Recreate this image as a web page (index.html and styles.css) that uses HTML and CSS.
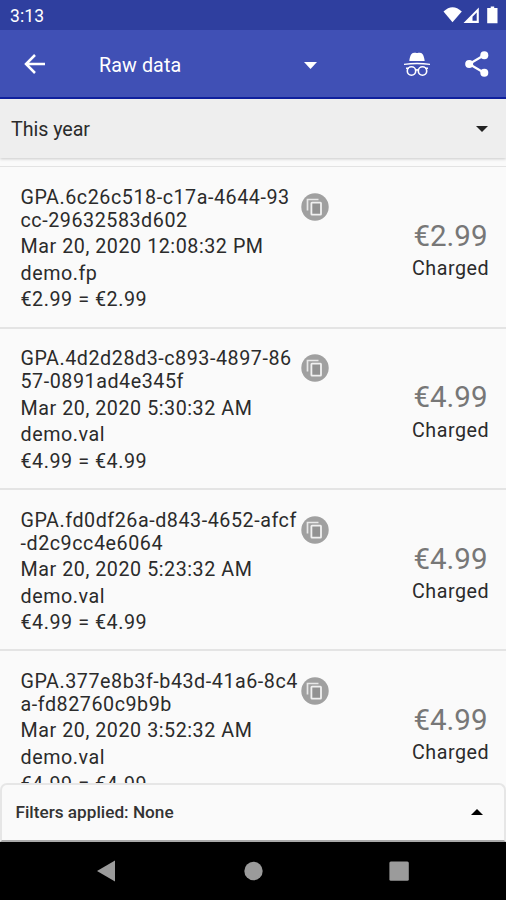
FILE: index.html
```html
<!DOCTYPE html>
<html lang="en">
<head>
<meta charset="utf-8">
<title>Raw data</title>
<link rel="stylesheet" href="styles.css">
</head>
<body>
<svg class="defs" aria-hidden="true">
  <symbol id="copy" viewBox="0 0 28 28">
    <circle cx="14" cy="14" r="13.7" fill="#a0a0a0"/>
    <path d="M6.500 17.500V6.500H17.500" fill="none" stroke="#e8e8e8" stroke-width="1.700"/>
    <rect x="10.400" y="9.700" width="9.600" height="12" rx=".6" fill="#929292" stroke="#f0f0f0" stroke-width="1.800"/>
  </symbol>
</svg>
<div class="screen">
  <header class="status">
    <span class="clock">3:13</span>
    <svg class="status-icons" viewBox="0 0 58 20">
      <path d="M1.500 6.500Q10.500 -2 19.800 6.500L10.500 17.300Z" fill="#fff"/>
      <path fill-rule="evenodd" d="M21.500 18L36.800 2.500V18ZM30.500 11.800V15.800H34.700V7.500Z" fill="#fff"/>
      <path d="M48.700 1.500h3.500v1.500h3.300v15.300h-10.300v-15.300h3.500z" fill="#fff"/>
    </svg>
  </header>
  <nav class="toolbar">
    <svg class="back" viewBox="0 0 22 20"><path d="M21 10H2.500M11 1L2 10l9 9" fill="none" stroke="#fff" stroke-width="2.500"/></svg>
    <span class="title">Raw data</span>
    <svg class="caret" viewBox="0 0 13 7"><path d="M0 0h13l-6.500 7z" fill="#fff"/></svg>
    <svg class="incognito" viewBox="0 0 26 25">
      <path d="M5.300 9C6 3.500 7.500.700 10 .700C12 .700 12 .900 13 .900S14.500.700 16 .700C18.500.700 20 3.500 20.700 9Z" fill="#fff"/>
      <path d="M0 11.700Q13 9.800 26 11.700V12.900Q13 11.600 0 12.900Z" fill="#fff"/>
      <g fill="none" stroke="#fff" stroke-width="1.600"><circle cx="7.500" cy="19" r="4.200"/><circle cx="18.500" cy="19" r="4.200"/><path d="M11.500 18.500Q13 17 14.500 18.500M2 16.200h3M21 16.200h3"/></g>
    </svg>
    <svg class="share" viewBox="0 0 24 26"><path d="M19 4.200L4.200 13L19 21.800" fill="none" stroke="#fff" stroke-width="2.200"/><g fill="#fff"><circle cx="19.300" cy="4.300" r="4"/><circle cx="4.200" cy="13" r="4"/><circle cx="19.300" cy="21.700" r="4"/></g></svg>
  </nav>
  <div class="period">
    <span>This year</span>
    <svg class="caret-dark" viewBox="0 0 12 6"><path d="M0 0h12l-6 6z" fill="#222"/></svg>
  </div>
  <main class="list">
    <article class="row">
      <div class="details"><p>GPA.6c26c518-c17a-4644-93<br>cc-29632583d602</p><p>Mar 20, 2020 12:08:32 PM</p><p>demo.fp</p><p>€2.99 = €2.99</p></div>
      <svg class="copy"><use href="#copy"/></svg>
      <div class="amount"><span class="price">€2.99</span><span class="state">Charged</span></div>
    </article>
    <article class="row">
      <div class="details"><p>GPA.4d2d28d3-c893-4897-86<br>57-0891ad4e345f</p><p>Mar 20, 2020 5:30:32 AM</p><p>demo.val</p><p>€4.99 = €4.99</p></div>
      <svg class="copy"><use href="#copy"/></svg>
      <div class="amount"><span class="price">€4.99</span><span class="state">Charged</span></div>
    </article>
    <article class="row">
      <div class="details"><p>GPA.fd0df26a-d843-4652-afcf<br>-d2c9cc4e6064</p><p>Mar 20, 2020 5:23:32 AM</p><p>demo.val</p><p>€4.99 = €4.99</p></div>
      <svg class="copy"><use href="#copy"/></svg>
      <div class="amount"><span class="price">€4.99</span><span class="state">Charged</span></div>
    </article>
    <article class="row">
      <div class="details"><p>GPA.377e8b3f-b43d-41a6-8c4<br>a-fd82760c9b9b</p><p>Mar 20, 2020 3:52:32 AM</p><p>demo.val</p><p>€4.99 = €4.99</p></div>
      <svg class="copy"><use href="#copy"/></svg>
      <div class="amount"><span class="price">€4.99</span><span class="state">Charged</span></div>
    </article>
  </main>
  <section class="filters">
    <span>Filters applied: None</span>
    <svg class="caret-up" viewBox="0 0 12 6"><path d="M0 6h12l-6-6z" fill="#000"/></svg>
  </section>
  <footer class="navbar">
    <svg viewBox="0 0 20 22"><path d="M1 11L19 .600V21.400Z" fill="#9b9b9b"/></svg>
    <svg viewBox="0 0 20 22"><circle cx="10.500" cy="11" r="9.200" fill="#9b9b9b"/></svg>
    <svg viewBox="0 0 20 22"><rect x=".400" y="1.400" width="19.400" height="19.400" rx="1.500" fill="#9b9b9b"/></svg>
  </footer>
</div>
</body>
</html>
```
FILE: styles.css
```css
* { box-sizing: border-box; }
body { margin: 0; font-family: Roboto, "Liberation Sans", sans-serif; color: #2b2b2b; }
p { margin: 0; }
svg { display: block; flex: none; }
.defs { display: none; }
.screen { width: 506px; height: 900px; display: flex; flex-direction: column; overflow: hidden; background: #fafafa; }
.status { flex: none; height: 30px; background: #2f3f9f; color: #fff; display: flex; justify-content: space-between; align-items: center; padding: 2px 6px 0 10px; }
.clock { font-size: 17.5px; line-height: 24px; letter-spacing: .1px; }
.status-icons { width: 58px; height: 20px; margin-top: -2px; }
.toolbar { flex: none; height: 69px; background: #4050b5; border-bottom: 2px solid #1021a1; color: #fff; display: flex; align-items: center; padding: 0 17px 0 24px; }
.back { width: 22px; height: 20px; margin-top: 1px; }
.title { font-size: 19.7px; letter-spacing: .1px; width: 205px; margin-left: 53px; margin-top: 4px; }
.caret { width: 13px; height: 7px; margin-top: 3px; }
.incognito { width: 26px; height: 25px; margin-left: 87px; margin-top: 1px; }
.share { width: 24px; height: 26px; margin-left: auto; }
.period { flex: none; height: 59px; background: #eee; display: flex; align-items: center; justify-content: space-between; padding: 1px 18px 0 11px; font-size: 19.7px; letter-spacing: -.05px; box-shadow: 0 1px 3px #0003; }
.caret-dark, .caret-up { width: 12px; height: 6px; }
.list { flex: 1; min-height: 0; overflow: hidden; margin-top: 8px; border-top: 1px solid #e3e3e3; }
.row { height: 161.3px; border-bottom: 2px solid #e4e4e4; display: flex; align-items: flex-start; padding: 18.7px 17px 0 20.5px; }
.row:first-child { height: 161.6px; }
.details { width: 280.5px; font-size: 19.7px; line-height: 23px; letter-spacing: .55px; white-space: nowrap; display: flex; flex-direction: column; gap: 3.6px; }
.copy { width: 28px; height: 28px; margin-top: 7px; }
.amount { margin-left: auto; margin-top: 33px; display: flex; flex-direction: column; align-items: flex-end; }
.price { font-size: 29.5px; line-height: 35px; color: #777; margin-right: 1.500px; }
.state { font-size: 19.7px; line-height: 23px; margin-top: 3.6px; letter-spacing: .5px; }
.filters { flex: none; height: 59px; background: #fafafa; border: 2px solid #e6e6e6; border-bottom-color: #aaa; border-radius: 7px 7px 0 0; display: flex; align-items: center; justify-content: space-between; padding: 0 21px 2px 13.5px; font-size: 17.2px; font-weight: 500; color: #333; }
.navbar { flex: none; height: 58px; background: #000; display: flex; align-items: center; justify-content: space-between; padding: 0 97px 0 96px; }
.navbar svg { width: 20px; height: 22px; }
```
